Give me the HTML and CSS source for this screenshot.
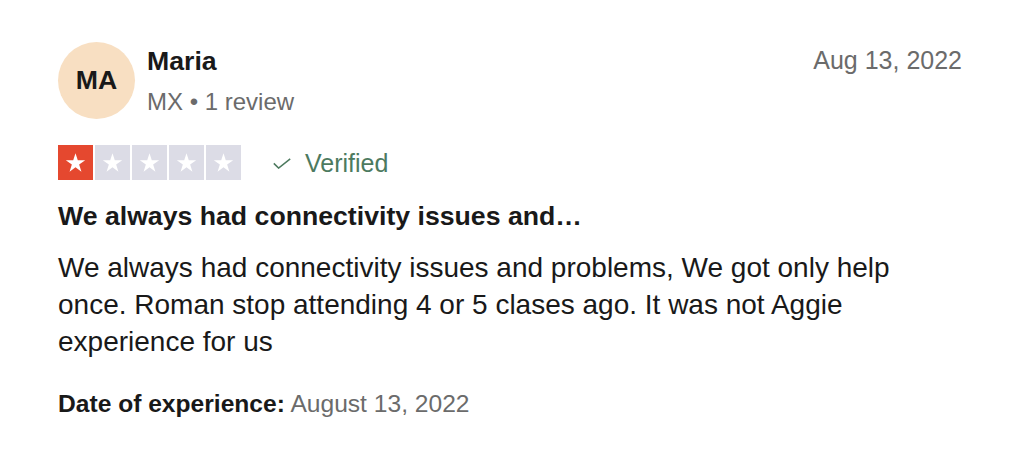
FILE: index.html
```html
<!DOCTYPE html>
<html>
<head>
<meta charset="utf-8">
<link rel="stylesheet" href="styles.css">
</head>
<body>
<article class="review">
  <header class="head">
    <div class="consumer">
      <div class="avatar">MA</div>
      <div class="who">
        <div class="name">Maria</div>
        <div class="meta">MX • 1 review</div>
      </div>
    </div>
    <time class="date">Aug 13, 2022</time>
  </header>
  <div class="rating-row">
    <div class="stars">
      <span class="star on"><svg viewBox="0 0 24 24"><path d="M12 3l2.2 6.8h7.1l-5.8 4.2 2.2 6.8L12 16.6l-5.7 4.2 2.2-6.8-5.8-4.2h7.1z"/></svg></span>
      <span class="star"><svg viewBox="0 0 24 24"><path d="M12 3l2.2 6.8h7.1l-5.8 4.2 2.2 6.8L12 16.6l-5.7 4.2 2.2-6.8-5.8-4.2h7.1z"/></svg></span>
      <span class="star"><svg viewBox="0 0 24 24"><path d="M12 3l2.2 6.8h7.1l-5.8 4.2 2.2 6.8L12 16.6l-5.7 4.2 2.2-6.8-5.8-4.2h7.1z"/></svg></span>
      <span class="star"><svg viewBox="0 0 24 24"><path d="M12 3l2.2 6.8h7.1l-5.8 4.2 2.2 6.8L12 16.6l-5.7 4.2 2.2-6.8-5.8-4.2h7.1z"/></svg></span>
      <span class="star"><svg viewBox="0 0 24 24"><path d="M12 3l2.2 6.8h7.1l-5.8 4.2 2.2 6.8L12 16.6l-5.7 4.2 2.2-6.8-5.8-4.2h7.1z"/></svg></span>
    </div>
    <div class="verified">
      <svg class="check" viewBox="0 0 18 11"><path d="M0.8 5.4l4.8 4.7L17.2 0.8" fill="none" stroke="#4d7a5f" stroke-width="1.5"/></svg>
      <span>Verified</span>
    </div>
  </div>
  <h2 class="title">We always had connectivity issues and…</h2>
  <p class="body">We always had connectivity issues and problems, We got only help once. Roman stop attending 4 or 5 clases ago. It was not Aggie experience for us</p>
  <p class="exp"><b>Date of experience:</b> <span>August 13, 2022</span></p>
</article>
</body>
</html>
```

FILE: styles.css
```css
* { box-sizing: border-box; }
html, body { margin: 0; background: #fff; }
body {
  font-family: "Liberation Sans", Arial, sans-serif;
  color: #191919;
}
.review {
  width: 1024px;
  padding: 42px 62px 0 58px;
}
.head {
  display: flex;
  justify-content: space-between;
  align-items: flex-start;
}
.consumer {
  display: flex;
  align-items: flex-start;
  gap: 12px;
}
.avatar {
  width: 77px;
  height: 77px;
  border-radius: 50%;
  background: #f8dfc2;
  display: flex;
  align-items: center;
  justify-content: center;
  font-weight: 700;
  font-size: 26.67px;
  color: #191919;
}
.who {
  display: flex;
  flex-direction: column;
  gap: 10px;
  margin-top: 3px;
}
.name { font-size: 26.67px; font-weight: 700; line-height: 32px; }
.meta { font-size: 24px; color: #6b6b6b; line-height: 30px; }
.date {
  font-size: 25px;
  line-height: 30px;
  color: #6b6b6b;
  margin-top: 3px;
}
.rating-row {
  display: flex;
  align-items: center;
  margin-top: 26px;
  gap: 32px;
}
.stars { display: flex; gap: 2px; }
.star {
  width: 35px;
  height: 35px;
  background: #dcdce6;
  display: flex;
  align-items: center;
  justify-content: center;
}
.star svg { width: 25px; height: 25px; fill: #fff; }
.star.on { background: #e5482f; }
.verified {
  display: flex;
  align-items: center;
  gap: 14px;
  font-size: 25px;
  line-height: 30px;
  color: #4d7a5f;
}
.check { width: 18px; height: 11px; margin-top: 2px; }
.title {
  font-size: 26.67px;
  font-weight: 700;
  margin: 20px 0 0;
  line-height: 32px;
}
.body {
  font-size: 28px;
  line-height: 37px;
  margin: 17px 0 0;
  max-width: 880px;
}
.exp {
  font-size: 24.6px;
  margin: 29px 0 0;
  line-height: 30px;
}
.exp b { font-weight: 700; }
.exp span { color: #6b6b6b; }
```
